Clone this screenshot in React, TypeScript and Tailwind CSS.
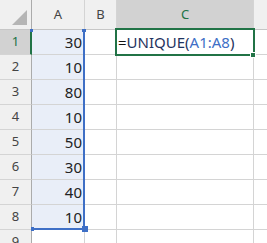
import React from "react";

const values = [30, 10, 80, 10, 50, 30, 40, 10];

const font = { fontFamily: '"Noto Sans", "Noto Sans CJK JP", sans-serif' };

const ColHeader: React.FC<{ label: string; width: string; active?: boolean }> = ({ label, width, active }) => (
  <div
    className={`${width} h-full shrink-0 flex items-center justify-center border-r border-[#d4d4d4] text-[13px] ${
      active ? "bg-[#d2d2d2] text-[#217346]" : "bg-[#f0f0f0] text-[#444]"
    }`}
  >
    {label}
  </div>
);

const Row: React.FC<{ n: number; value?: number; active?: boolean }> = ({ n, value, active }) => (
  <div className="flex h-[25px]">
    <div
      className={`w-[32px] shrink-0 flex items-center justify-center border-b border-b-[#d4d4d4] text-[13px] ${
        active
          ? "bg-[#d2d2d2] text-[#217346] border-r-2 border-r-[#217346] pl-[1px]"
          : "bg-[#f0f0f0] text-[#444] border-r border-r-[#ababab]"
      }`}
    >
      {n}
    </div>
    <div
      className={`w-[53px] shrink-0 flex items-center justify-end pr-[2px] border-r border-b border-[#d4d4d4] text-[15px] text-[#222] ${
        value !== undefined ? "bg-[#e9eef8]" : "bg-white"
      }`}
    >
      {value}
    </div>
    <div className="w-[32px] shrink-0 border-r border-b border-[#d4d4d4]" />
    <div className="w-[137px] shrink-0 border-r border-b border-[#d4d4d4]" />
    <div className="flex-1 border-b border-[#d4d4d4]" />
  </div>
);

export default function App() {
  return (
    <div className="relative w-[267px] h-[243px] overflow-hidden bg-white" style={font}>
      {/* column headers */}
      <div className="flex h-[30px] border-b border-[#c6c6c6]">
        <div className="relative w-[32px] shrink-0 h-full bg-[#f0f0f0] border-r border-[#ababab]">
          <svg className="absolute left-0 top-0" width="32" height="29">
            <polygon points="27,10 27,25 12,25" fill="#b5b5b5" />
          </svg>
        </div>
        <ColHeader label="A" width="w-[53px]" />
        <ColHeader label="B" width="w-[32px]" />
        <ColHeader label="C" width="w-[137px]" active />
        <div className="flex-1 h-full bg-[#f0f0f0]" />
      </div>

      {values.map((v, i) => (
        <Row key={i} n={i + 1} value={v} active={i === 0} />
      ))}
      <Row n={9} />

      {/* formula text in C1 */}
      <div className="absolute left-[118px] top-[30px] h-[24px] flex items-center text-[15px] whitespace-nowrap">
        <span className="text-[#111]">=</span>
        <span className="text-[#1f3460]">UNIQUE(</span>
        <span className="text-[#3e6fc6]">A1:A8</span>
        <span className="text-[#1f3460]">)</span>
      </div>

      {/* active cell border + fill handle */}
      <div className="absolute left-[115px] top-[28px] w-[140px] h-[28px] border-[2px] border-[#217346]" />
      <div className="absolute left-[250px] top-[52px] w-[6px] h-[6px] bg-[#217346] border border-white" />

      {/* referenced range A1:A8 */}
      <div className="absolute left-[83px] top-[30px] w-[2px] h-[200px] bg-[#3e6fc6]" />
      <div className="absolute left-[32px] top-[228px] w-[53px] h-[2px] bg-[#3e6fc6]" />
      <div className="absolute left-[30px] top-[29px] w-[3px] h-[3px] bg-[#3e6fc6]" />
      <div className="absolute left-[82px] top-[29px] w-[4px] h-[3px] bg-[#3e6fc6]" />
      <div className="absolute left-[31px] top-[227px] w-[3px] h-[4px] bg-[#3e6fc6]" />
      <div className="absolute left-[82px] top-[226px] w-[6px] h-[6px] bg-[#3e6fc6]" />
    </div>
  );
}
